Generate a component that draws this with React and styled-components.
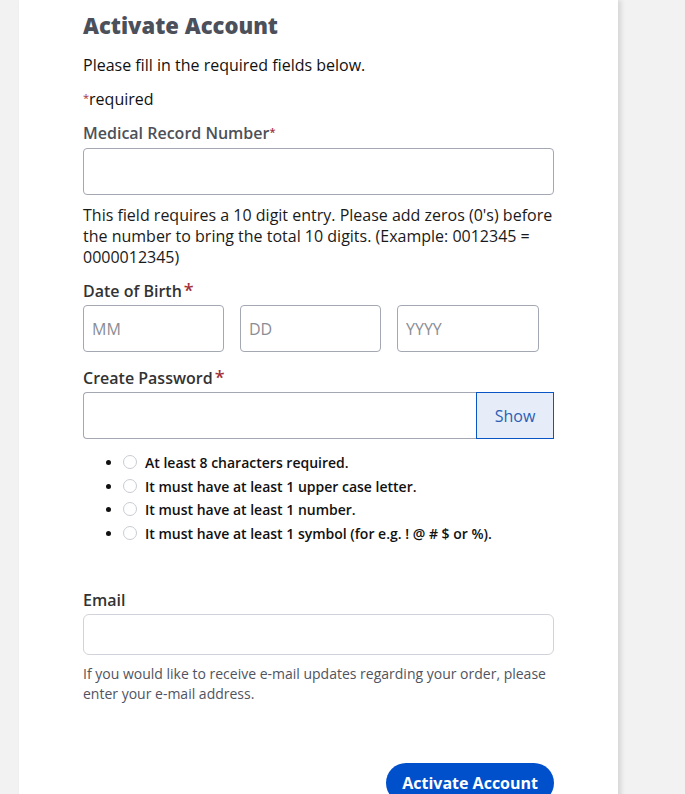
import React from 'react';
import styled, {createGlobalStyle} from 'styled-components';

const GlobalStyle = createGlobalStyle`
    html, body {
        margin: 0;
        padding: 0;
        background-color: #f2f2f2;
        font-family: "Open Sans", "Noto Sans", sans-serif;
    }
`;

const rules = [
    'At least 8 characters required.',
    'It must have at least 1 upper case letter.',
    'It must have at least 1 number.',
    'It must have at least 1 symbol (for e.g. ! @ # $ or %).',
];

const App = () => {
    return (
        <>
            <GlobalStyle />
            <Page>
                <Card>
                    <Heading>Activate Account</Heading>
                    <Intro>Please fill in the required fields below.</Intro>
                    <RequiredNote><SmallStar>*</SmallStar>required</RequiredNote>

                    <Field $gap={10}>
                        <MutedLabel>Medical Record Number<SmallStar>*</SmallStar></MutedLabel>
                        <TextInput type="text" />
                        <FieldHelp>
                            This field requires a 10 digit entry. Please add zeros (0's) before
                            the number to bring the total 10 digits. (Example: 0012345 =
                            0000012345)
                        </FieldHelp>
                    </Field>

                    <Field $gap={11}>
                        <Label>Date of Birth<BigStar>*</BigStar></Label>
                        <DateRow>
                            <TextInput type="text" placeholder="MM" />
                            <TextInput type="text" placeholder="DD" />
                            <TextInput type="text" placeholder="YYYY" />
                        </DateRow>
                    </Field>

                    <Field $gap={14}>
                        <Label>Create Password<BigStar>*</BigStar></Label>
                        <PasswordRow>
                            <PasswordInput type="password" />
                            <ShowButton type="button">Show</ShowButton>
                        </PasswordRow>
                        <RuleList>
                            {rules.map((r, index) => (
                                <RuleItem key={`rule-${index}`}>
                                    <RuleCircle />
                                    {r}
                                </RuleItem>
                            ))}
                        </RuleList>
                    </Field>

                    <Field $gap={43}>
                        <Label>Email</Label>
                        <EmailInput type="email" />
                        <EmailHelp>
                            If you would like to receive e-mail updates regarding your order, please
                            enter your e-mail address.
                        </EmailHelp>
                    </Field>

                    <Actions>
                        <PrimaryButton type="button">Activate Account</PrimaryButton>
                    </Actions>
                </Card>
            </Page>
        </>
    );
};

const Page = styled.div`
    min-height: 794px;
    padding-left: 19px;
    display: flex;
`;

const Card = styled.main`
    width: 471px;
    min-height: 794px;
    background-color: #fff;
    padding: 10px 64px 0 64px;
    box-shadow: 3px 0 5px rgba(0, 0, 0, 0.12);
    display: flex;
    flex-direction: column;
`;

const Heading = styled.h1`
    margin: 0;
    font-size: 22px;
    line-height: 30px;
    font-weight: 800;
    color: #4b505b;
`;

const Intro = styled.p`
    margin: 13px 0 0 0;
    font-size: 16px;
    line-height: 24px;
    color: #111;
`;

const RequiredNote = styled.p`
    margin: 10px 0 0 0;
    font-size: 16px;
    line-height: 24px;
    color: #111;
`;

const SmallStar = styled.span`
    color: #a3313a;
    font-size: 11px;
    vertical-align: 3px;
    line-height: 0;
`;

const BigStar = styled.span`
    color: #a3313a;
    font-size: 18px;
    line-height: 0;
    margin-left: 2px;
`;

const Field = styled.div`
    display: flex;
    flex-direction: column;
    margin-top: ${(p) => p.$gap}px;
`;

const Label = styled.label`
    font-size: 16px;
    line-height: 24px;
    font-weight: 600;
    color: #333;
    margin-bottom: 2px;
`;

const MutedLabel = styled(Label)`
    color: #4d5058;
    margin-bottom: 3px;
`;

const TextInput = styled.input`
    box-sizing: border-box;
    width: 100%;
    height: 47px;
    border: 1px solid #a4a8b3;
    border-radius: 4px;
    padding: 0 8px;
    font-family: inherit;
    font-size: 16px;
    color: #222;
    background: #fff;
    &::placeholder {
        color: #8a8d94;
    }
`;

const FieldHelp = styled.p`
    margin: 10px 0 0 0;
    font-size: 16px;
    line-height: 21px;
    color: #1a1a1a;
`;

const DateRow = styled.div`
    display: grid;
    grid-template-columns: 141px 141px 142px;
    column-gap: 16px;
`;

const PasswordRow = styled.div`
    display: flex;
    height: 47px;
`;

const PasswordInput = styled(TextInput)`
    flex: 1;
    border-right: none;
    border-radius: 4px 0 0 4px;
`;

const ShowButton = styled.button`
    width: 78px;
    border: 1px solid #0a55c6;
    background-color: #e6edf8;
    color: #2c5fb5;
    font-family: inherit;
    font-size: 16px;
    padding: 0;
`;

const RuleList = styled.ul`
    margin: 12px 0 0 0;
    padding-left: 40px;
`;

const RuleItem = styled.li`
    height: 23.6px;
    font-size: 14px;
    line-height: 23.6px;
    font-weight: 600;
    color: #111;
`;

const RuleCircle = styled.span`
    display: inline-block;
    box-sizing: border-box;
    width: 14px;
    height: 14px;
    border: 1px solid #c9ccd2;
    border-radius: 50%;
    margin-right: 8px;
    vertical-align: -1px;
`;

const EmailInput = styled(TextInput)`
    height: 41px;
    border-color: #d2d2da;
    border-radius: 6px;
`;

const EmailHelp = styled.p`
    margin: 9px 0 0 0;
    font-size: 14px;
    line-height: 20px;
    color: #505460;
`;

const Actions = styled.div`
    display: flex;
    justify-content: flex-end;
    margin-top: 59px;
`;

const PrimaryButton = styled.button`
    height: 40px;
    padding: 0 16px;
    border: none;
    border-radius: 20px;
    background-color: #0050cb;
    color: #fff;
    font-family: inherit;
    font-size: 16px;
    font-weight: 700;
`;

export default App;
